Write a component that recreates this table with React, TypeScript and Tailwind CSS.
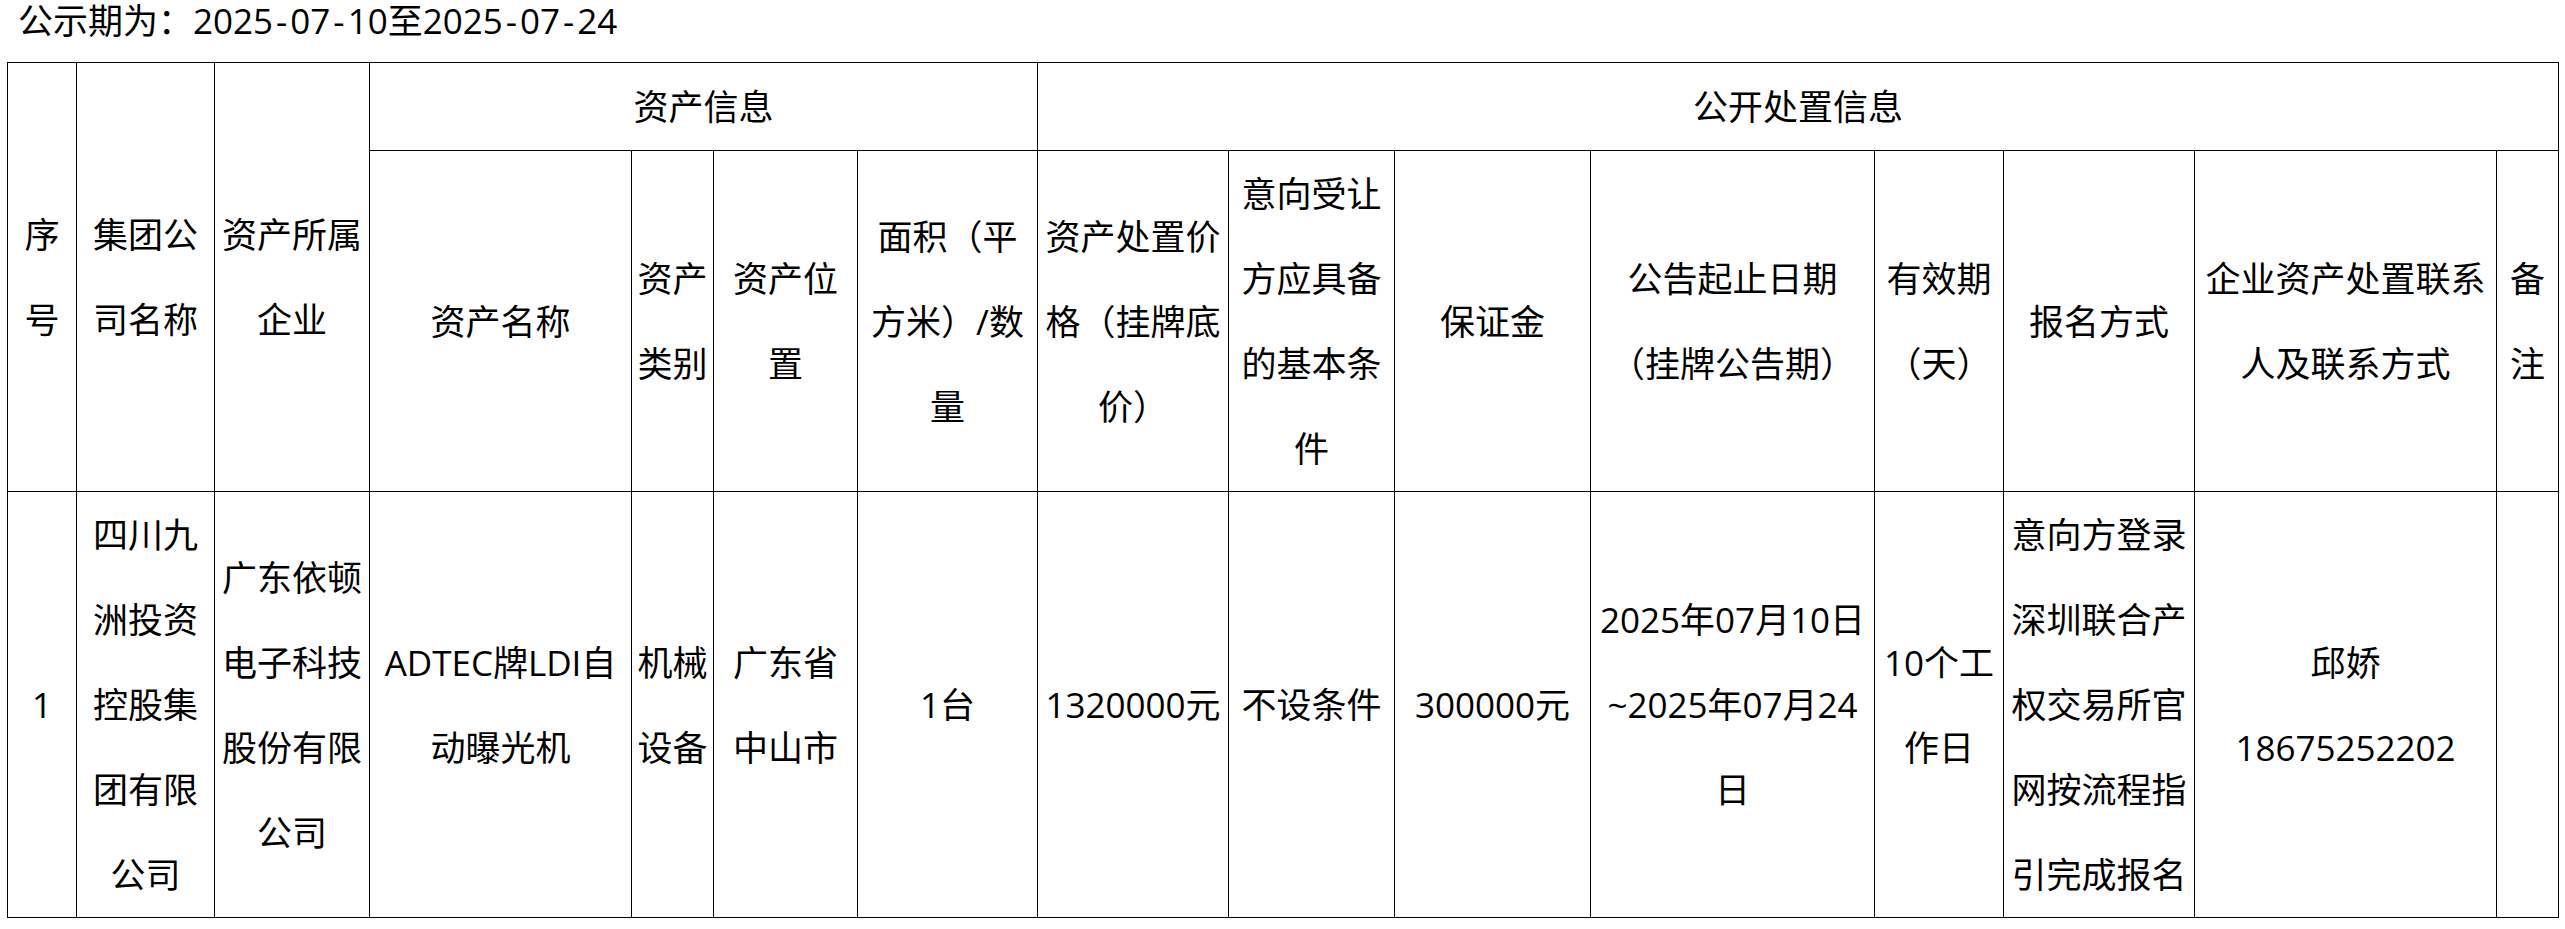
import React from "react";

const Lines = ({ lines }: { lines: string[] }) => (
  <>
    {lines.map((l, i) => (
      <div key={i} className="whitespace-nowrap">
        {l}
      </div>
    ))}
  </>
);

const cellCls = "border border-black px-[4px] py-0 text-center align-middle font-normal";

const header2: string[][] = [
  ["资产名称"],
  ["资产", "类别"],
  ["资产位", "置"],
  ["面积（平", "方米）/数", "量"],
  ["资产处置价", "格（挂牌底", "价）"],
  ["意向受让", "方应具备", "的基本条", "件"],
  ["保证金"],
  ["公告起止日期", "（挂牌公告期）"],
  ["有效期", "（天）"],
  ["报名方式"],
  ["企业资产处置联系", "人及联系方式"],
  ["备", "注"],
];

const data: string[][] = [
  ["1"],
  ["四川九", "洲投资", "控股集", "团有限", "公司"],
  ["广东依顿", "电子科技", "股份有限", "公司"],
  ["ADTEC牌LDI自", "动曝光机"],
  ["机械", "设备"],
  ["广东省", "中山市"],
  ["1台"],
  ["1320000元"],
  ["不设条件"],
  ["300000元"],
  ["2025年07月10日", "~2025年07月24", "日"],
  ["10个工", "作日"],
  ["意向方登录", "深圳联合产", "权交易所官", "网按流程指", "引完成报名"],
  ["邱娇", "18675252202"],
  [""],
];

const H = () => <span className="mx-[3px]">-</span>;

export default function App() {
  return (
    <div className="min-h-screen bg-white text-black font-['Open_Sans','Noto_Sans_CJK_SC',sans-serif] text-[35px] leading-[85px]">
      <div className="pl-[18px] leading-[42px] whitespace-nowrap">
        公示期为：2025<H />07<H />10至2025<H />07<H />24
      </div>
      <div className="mt-[20px] ml-[7px]">
        <table className="table-fixed border-collapse w-[2551px]">
          <colgroup>
            <col className="w-[69px]" />
            <col className="w-[138px]" />
            <col className="w-[155px]" />
            <col className="w-[262px]" />
            <col className="w-[82px]" />
            <col className="w-[144px]" />
            <col className="w-[180px]" />
            <col className="w-[191px]" />
            <col className="w-[166px]" />
            <col className="w-[196px]" />
            <col className="w-[284px]" />
            <col className="w-[129px]" />
            <col className="w-[191px]" />
            <col className="w-[302px]" />
            <col className="w-[62px]" />
          </colgroup>
          <thead>
            <tr className="h-[88px]">
              <th rowSpan={2} className={cellCls}>
                <Lines lines={["序", "号"]} />
              </th>
              <th rowSpan={2} className={cellCls}>
                <Lines lines={["集团公", "司名称"]} />
              </th>
              <th rowSpan={2} className={cellCls}>
                <Lines lines={["资产所属", "企业"]} />
              </th>
              <th colSpan={4} className={cellCls}>
                资产信息
              </th>
              <th colSpan={8} className={cellCls}>
                公开处置信息
              </th>
            </tr>
            <tr className="h-[341px]">
              {header2.map((l, i) => (
                <th key={i} className={cellCls}>
                  <Lines lines={l} />
                </th>
              ))}
            </tr>
          </thead>
          <tbody>
            <tr className="h-[425px]">
              {data.map((l, i) => (
                <td key={i} className={cellCls}>
                  <Lines lines={l} />
                </td>
              ))}
            </tr>
          </tbody>
        </table>
      </div>
    </div>
  );
}
